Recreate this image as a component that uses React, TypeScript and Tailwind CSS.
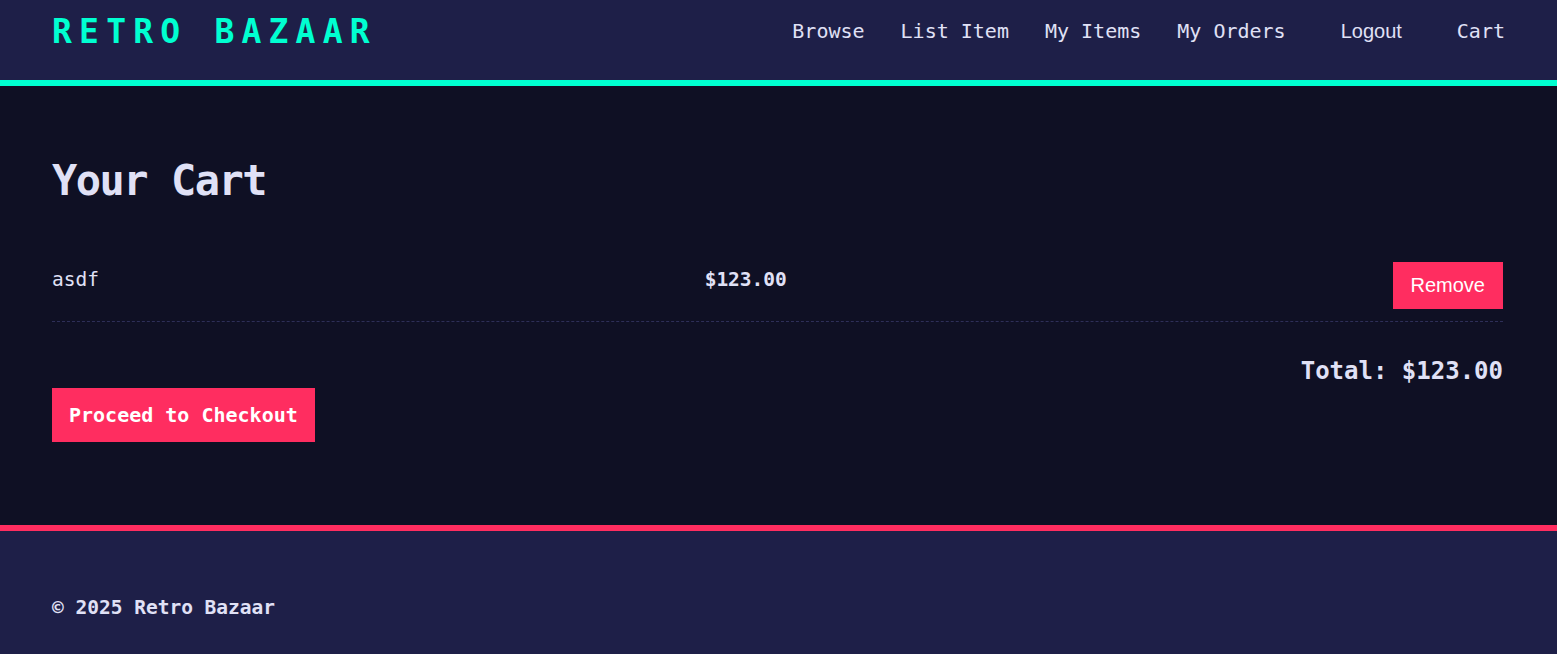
import React from "react";

const mono = "font-['DejaVu_Sans_Mono','Liberation_Mono',monospace]";

const links = ["Browse", "List Item", "My Items", "My Orders"];

export default function App() {
  return (
    <div className={`flex min-h-[654px] flex-col bg-[#0f1024] text-[#e0e1f6] ${mono}`}>
      {/* header */}
      <header className="flex h-[86px] items-center justify-between border-b-[6px] border-[#00ffd1] bg-[#1e1f48] px-[52px] pb-[18px]">
        <div className="text-[33px] font-bold leading-none tracking-[7.2px] text-[#00ffd1]">RETRO BAZAAR</div>
        <nav className="flex items-center gap-[36px] text-[20px] leading-[30px]">
          {links.map((l) => (
            <a key={l} href="#" className="whitespace-pre">
              {l}
            </a>
          ))}
          <button className="px-[19px] font-['Liberation_Sans',Arial,sans-serif] text-[20px] leading-[30px] text-[#e0e1f6]">
            Logout
          </button>
          <a href="#">Cart</a>
        </nav>
      </header>

      {/* main */}
      <main className="flex-1 px-[54px] pb-[83px] pl-[52px] pt-[70px]">
        <h1 className="text-[42px] font-bold leading-[50px] tracking-[-1.5px]">Your Cart</h1>

        <div className="mt-[44px] flex items-start justify-between border-b border-dashed border-[#2e2f58] py-3">
          <span className="pt-[3px] text-[19.5px] leading-[30px]">asdf</span>
          <span className="pt-[3px] text-[19.5px] font-bold leading-[30px]">$123.00</span>
          <button className="bg-[#ff2d60] px-[18px] py-3 font-['Liberation_Sans',Arial,sans-serif] text-[20px] leading-[23px] text-white">
            Remove
          </button>
        </div>

        <div className="mt-[31px] text-right text-[24px] font-bold leading-[36px]">Total: $123.00</div>

        <button className="mt-[-1px] bg-[#ff2d60] px-[17px] py-3 text-[20px] font-bold leading-[30px] text-white">
          Proceed to Checkout
        </button>
      </main>

      {/* footer */}
      <footer className="h-[129px] border-t-[6px] border-[#ff2d60] bg-[#1e1f48] px-[52px] pt-[62px]">
        <p className="text-[19.5px] font-bold leading-[30px]">© 2025 Retro Bazaar</p>
      </footer>
    </div>
  );
}
